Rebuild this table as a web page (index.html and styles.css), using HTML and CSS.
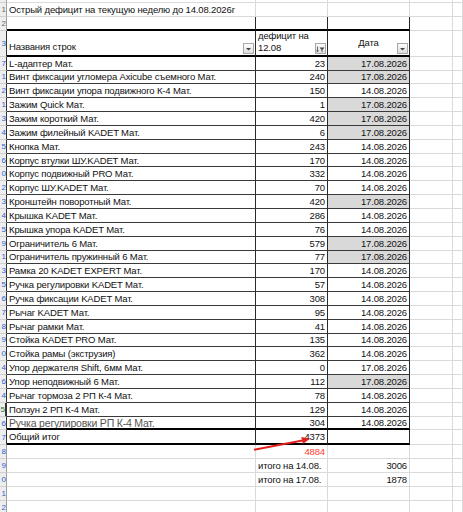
FILE: index.html
```html
<!DOCTYPE html>
<html lang="ru">
<head>
    <meta charset="UTF-8">
    <meta name="viewport" content="width=device-width, initial-scale=1.0">
    <title>Острый дефицит</title>
    <link rel="stylesheet" href="styles.css">
</head>
<body>
    <div class="sheet">
        <div class="row top"><div class="rh"></div><div></div><div></div><div></div><div></div><div></div></div>
        <div class="row"><div class="rh gray">1</div><div>Острый дефицит на текущую неделю до 14.08.2026г</div><div></div><div></div><div></div><div></div></div>
        <div class="row above"><div class="rh gray">2</div><div class="t"></div><div class="t"></div><div class="t"></div><div></div><div></div></div>
        <div class="row hdr tbl">
            <div class="rh">3</div>
            <div class="t">Названия строк<span class="dd"><svg width="9" height="9" viewBox="0 0 9 9"><path d="M2 4h5L4.5 6.5z" fill="#444"/></svg></span></div>
            <div class="t"><span class="two">дефицит на<br>12.08</span><span class="dd"><svg width="9" height="9" viewBox="0 0 9 9"><path d="M1.5 2.5v5M0.5 6.5l1 1.3 1-1.3" stroke="#444" stroke-width="0.8" fill="none"/><path d="M3.5 3.5h5l-2 2.2v2.3l-1-0.6v-1.7z" fill="#444"/></svg></span></div>
            <div class="t center">Дата<span class="dd"><svg width="9" height="9" viewBox="0 0 9 9"><path d="M2 4h5L4.5 6.5z" fill="#444"/></svg></span></div>
            <div></div><div></div>
        </div>

        <div class="row tbl"><div class="rh">7</div><div class="t">L-адаптер Мат.</div><div class="t num">23</div><div class="t num fill">17.08.2026</div><div></div><div></div></div>
        <div class="row tbl"><div class="rh">1</div><div class="t">Винт фиксации угломера Axicube съемного Мат.</div><div class="t num">240</div><div class="t num fill">17.08.2026</div><div></div><div></div></div>
        <div class="row tbl"><div class="rh">2</div><div class="t">Винт фиксации упора подвижного К-4 Мат.</div><div class="t num">150</div><div class="t num">14.08.2026</div><div></div><div></div></div>
        <div class="row tbl"><div class="rh">1</div><div class="t">Зажим Quick Мат.</div><div class="t num">1</div><div class="t num fill">17.08.2026</div><div></div><div></div></div>
        <div class="row tbl"><div class="rh">3</div><div class="t">Зажим короткий Мат.</div><div class="t num">420</div><div class="t num fill">17.08.2026</div><div></div><div></div></div>
        <div class="row tbl"><div class="rh">4</div><div class="t">Зажим филейный KADET Мат.</div><div class="t num">6</div><div class="t num fill">17.08.2026</div><div></div><div></div></div>
        <div class="row tbl"><div class="rh">5</div><div class="t">Кнопка Мат.</div><div class="t num">243</div><div class="t num">14.08.2026</div><div></div><div></div></div>
        <div class="row tbl"><div class="rh">6</div><div class="t">Корпус втулки ШУ.KADET Мат.</div><div class="t num">170</div><div class="t num">14.08.2026</div><div></div><div></div></div>
        <div class="row tbl"><div class="rh">0</div><div class="t">Корпус подвижный PRO Мат.</div><div class="t num">332</div><div class="t num">14.08.2026</div><div></div><div></div></div>
        <div class="row tbl"><div class="rh">2</div><div class="t">Корпус ШУ.KADET Мат.</div><div class="t num">70</div><div class="t num">14.08.2026</div><div></div><div></div></div>
        <div class="row tbl"><div class="rh">3</div><div class="t">Кронштейн поворотный Мат.</div><div class="t num">420</div><div class="t num fill">17.08.2026</div><div></div><div></div></div>
        <div class="row tbl"><div class="rh">4</div><div class="t">Крышка KADET Мат.</div><div class="t num">286</div><div class="t num">14.08.2026</div><div></div><div></div></div>
        <div class="row tbl"><div class="rh">5</div><div class="t">Крышка упора KADET Мат.</div><div class="t num">76</div><div class="t num">14.08.2026</div><div></div><div></div></div>
        <div class="row tbl"><div class="rh">9</div><div class="t">Ограничитель 6 Мат.</div><div class="t num">579</div><div class="t num fill">17.08.2026</div><div></div><div></div></div>
        <div class="row tbl"><div class="rh">1</div><div class="t">Ограничитель пружинный 6 Мат.</div><div class="t num">77</div><div class="t num fill">17.08.2026</div><div></div><div></div></div>
        <div class="row tbl"><div class="rh">3</div><div class="t">Рамка 20 KADET EXPERT Мат.</div><div class="t num">170</div><div class="t num">14.08.2026</div><div></div><div></div></div>
        <div class="row tbl"><div class="rh">5</div><div class="t">Ручка регулировки KADET Мат.</div><div class="t num">57</div><div class="t num">14.08.2026</div><div></div><div></div></div>
        <div class="row tbl"><div class="rh">6</div><div class="t">Ручка фиксации KADET Мат.</div><div class="t num">308</div><div class="t num">14.08.2026</div><div></div><div></div></div>
        <div class="row tbl"><div class="rh">7</div><div class="t">Рычаг KADET Мат.</div><div class="t num">95</div><div class="t num">14.08.2026</div><div></div><div></div></div>
        <div class="row tbl"><div class="rh">8</div><div class="t">Рычаг рамки Мат.</div><div class="t num">41</div><div class="t num">14.08.2026</div><div></div><div></div></div>
        <div class="row tbl"><div class="rh">9</div><div class="t">Стойка KADET PRO Мат.</div><div class="t num">135</div><div class="t num">14.08.2026</div><div></div><div></div></div>
        <div class="row tbl"><div class="rh">0</div><div class="t">Стойка рамы (экструзия)</div><div class="t num">362</div><div class="t num">14.08.2026</div><div></div><div></div></div>
        <div class="row tbl"><div class="rh">4</div><div class="t">Упор держателя Shift, 6мм Мат.</div><div class="t num">0</div><div class="t num">17.08.2026</div><div></div><div></div></div>
        <div class="row tbl"><div class="rh">6</div><div class="t">Упор неподвижный 6 Мат.</div><div class="t num">112</div><div class="t num fill">17.08.2026</div><div></div><div></div></div>
        <div class="row tbl"><div class="rh">4</div><div class="t">Рычаг тормоза 2 РП К-4 Мат.</div><div class="t num">78</div><div class="t num">14.08.2026</div><div></div><div></div></div>
        <div class="row tbl"><div class="rh active">5</div><div class="t">Ползун 2 РП К-4 Мат.</div><div class="t num">129</div><div class="t num">14.08.2026</div><div></div><div></div></div>
        <div class="row tbl above"><div class="rh">6</div><div class="t big">Ручка регулировки РП К-4 Мат.</div><div class="t num">304</div><div class="t num">14.08.2026</div><div></div><div></div></div>
        <div class="row tbl total"><div class="rh">7</div><div class="t">Общий итог</div><div class="t num">4373</div><div class="t num"></div><div></div><div></div></div>

        <div class="row"><div class="rh">8</div><div></div><div class="num red">4884</div><div></div><div></div><div></div></div>
        <div class="row"><div class="rh">9</div><div></div><div>итого на 14.08.</div><div class="num">3006</div><div></div><div></div></div>
        <div class="row"><div class="rh">0</div><div></div><div>итого на 17.08.</div><div class="num">1878</div><div></div><div></div></div>
        <div class="row"><div class="rh">1</div><div></div><div></div><div></div><div></div><div></div></div>
        <div class="row"><div class="rh">2</div><div></div><div></div><div></div><div></div><div></div></div>

        <svg class="arrow" width="463" height="512" viewBox="0 0 463 512">
            <line x1="254" y1="449.8" x2="302.5" y2="440.5" stroke="#e3201b" stroke-width="2"/>
            <path d="M310 438.8L301.3 436.9 302.9 444z" fill="#e3201b"/>
        </svg>
    </div>
</body>
</html>
```

FILE: styles.css
```css
body {
    margin: 0;
    font-family: "Liberation Sans", Arial, sans-serif;
    font-size: 9.5px;
    letter-spacing: -0.15px;
    color: #111;
    background-color: #fff;
}
.sheet {
    position: relative;
    width: 463px;
    height: 512px;
    overflow: hidden;
}
.row {
    display: grid;
    grid-template-columns: 7px 249px 72px 82px 43px 10px;
    height: 13.85px;
}
.row > div {
    box-sizing: border-box;
    display: flex;
    align-items: center;
    padding: 0 2px;
    white-space: nowrap;
    overflow: hidden;
    border-right: 1px solid #dadada;
    border-bottom: 1px solid #dadada;
}
.row.top {
    height: 3px;
}
.row .rh {
    justify-content: flex-end;
    padding: 0;
    font-size: 8px;
    letter-spacing: 0;
    color: #2f5fd0;
    background-color: #eeeeee;
    border-right-color: #9e9e9e;
    border-bottom-color: #d0d0d0;
}
.row .rh.gray {
    color: #666;
}
.row .rh.active {
    color: #217346;
    border-right: 2px solid #217346;
}
.row.tbl .rh {
    border-right-color: #333;
}
.row > .t {
    border-right-color: #2a2a2a;
    border-bottom-color: #3a3a3a;
}
.row.above > .t {
    border-bottom: 2px solid #000;
}
.num {
    justify-content: flex-end;
}
.fill {
    background-color: #d9d9d9;
}
.red {
    color: #ff3b30;
}
.big {
    font-size: 10.5px;
    letter-spacing: -0.2px;
    color: #555;
}

/* header of the pivot */
.row.hdr {
    height: 26px;
}
.row.hdr > .t {
    position: relative;
    align-items: flex-end;
    padding-bottom: 3px;
    border-bottom: 2px solid #000;
}
.row.hdr > .t.center {
    justify-content: center;
    align-items: center;
    padding-bottom: 0;
}
.two {
    line-height: 12px;
    margin-bottom: -2px;
}
.dd {
    position: absolute;
    right: 1px;
    bottom: 1px;
    width: 11px;
    height: 11px;
    box-sizing: border-box;
    display: flex;
    align-items: center;
    justify-content: center;
    border: 1px solid #a8a8a8;
    background: linear-gradient(#fdfdfd, #dedede);
}

.row.total {
    height: 15px;
}
.row.total > .t {
    border-bottom: 2px solid #000;
}

.arrow {
    position: absolute;
    left: 0;
    top: 0;
    pointer-events: none;
}
```
